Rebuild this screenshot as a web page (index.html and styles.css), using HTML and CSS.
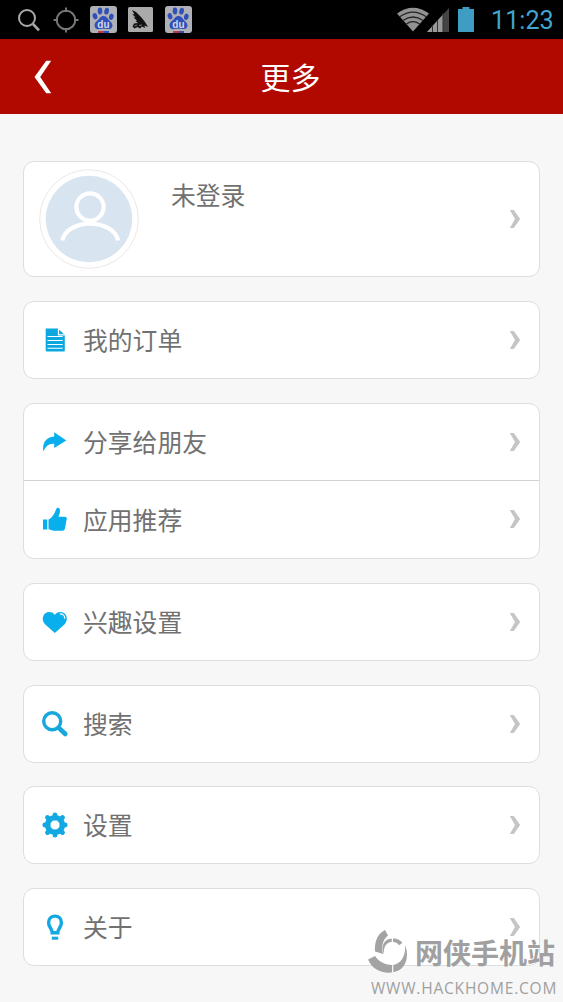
FILE: index.html
```html
<!DOCTYPE html>
<html lang="zh-CN">
<head>
<meta charset="utf-8">
<title>更多</title>
<link rel="stylesheet" href="styles.css">
</head>
<body>
<svg class="defs" width="0" height="0">
  <symbol id="chevron" viewBox="0 0 12 20"><path d="M.8 1H4.8L11.2 10L4.8 19H.8L6 10Z" fill="#c5c5c5"/></symbol>
  <symbol id="paw" viewBox="0 0 27 27">
    <rect width="27" height="27" rx="3" fill="#b0b1b6"/>
    <g fill="#3050b8">
      <ellipse cx="10" cy="5" rx="2.3" ry="3.4"/><ellipse cx="16.6" cy="5.2" rx="2.3" ry="3.4" transform="rotate(12 16.6 5.2)"/>
      <ellipse cx="5" cy="10.3" rx="2.3" ry="3.2" transform="rotate(-18 5 10.3)"/><ellipse cx="21.3" cy="10.8" rx="2.3" ry="3.2" transform="rotate(12 21.3 10.8)"/>
      <path d="M13.4 10C10.5 10 9.6 12.7 7.8 14.3C5.7 16.2 4.2 17.4 4.6 20C5 23 7.3 23.5 9.8 23C12.4 22.5 14.7 22.5 17.3 23C20 23.5 22.4 22.4 22.5 19.5C22.6 17 20.5 15.9 18.8 13.9C17.4 12.2 16.1 10 13.4 10Z"/>
    </g>
    <rect x="8" y="25" width="6" height="2" fill="#b63c42"/><rect x="14" y="25" width="5" height="2" fill="#3050b8"/>
  </symbol>
</svg>

<header class="status">
  <svg class="s-search" viewBox="0 0 24 24"><circle cx="10" cy="10" r="8" fill="none" stroke="#a9a9a9" stroke-width="2"/><path d="M16 16L22 22.3" stroke="#a9a9a9" stroke-width="2.6"/></svg>
  <svg class="s-target" viewBox="0 0 26 26"><circle cx="13" cy="13" r="9.3" fill="none" stroke="#777" stroke-width="2"/><path d="M13 .5V5M13 21V25.5M.5 13H5M21 13H25.5" stroke="#777" stroke-width="2"/></svg>
  <svg class="s-paw" viewBox="0 0 27 27"><use href="#paw"/><text x="13.4" y="21.6" class="du">du</text></svg>
  <svg class="s-bird" viewBox="0 0 25 25"><rect width="25" height="25" rx="1.5" fill="#aaa"/><path d="M4 3L8 5L13 10L17 15L20 20L16.5 18.5L17 21L14 19.5L12 21.5L9.5 20L6.5 21.5L4.5 19.5L6 16.5L10 16L7.5 14L9 13.5L5.5 10.5L7.5 10.5L4.2 7L6.5 7.5Z" fill="#111"/><path d="M6.5 19L9 18M11 18.5L14 18" stroke="#999" stroke-width=".8"/></svg>
  <svg class="s-paw s-paw-last" viewBox="0 0 27 27"><use href="#paw"/><text x="13.4" y="21.6" class="du">du</text></svg>
  <span class="spacer"></span>
  <svg class="s-wifi" viewBox="0 0 32 25"><path d="M0 6.5Q16-5 32 6.5L16 24.5Z" fill="#929292"/><path d="M2.8 9.8Q16 .5 29.2 9.8M6 13.5Q16 6.5 26 13.5M9.4 17Q16 12.4 22.6 17" fill="none" stroke="#222" stroke-width="1.3"/></svg>
  <svg class="s-signal" viewBox="0 0 22 24"><path d="M0 24L22 0V24Z" fill="#444"/><path d="M0 24L16 6.5V24Z" fill="#999"/><path d="M5.5 17V24M10.5 12V24M16 5V24" stroke="#333" stroke-width="1"/></svg>
  <svg class="s-battery" viewBox="0 0 16 25"><path d="M0 2H4.5V0H11.5V2H16V25H0Z" fill="#3f9dc4"/></svg>
  <time class="clock">11:23</time>
</header>

<nav class="titlebar">
  <svg class="back" viewBox="0 0 18 34"><path d="M12.2 .7H17.2L6.2 17L17.2 33.3H12.2L.5 17Z" fill="#fff"/></svg>
  <h1 class="title">更多</h1>
</nav>

<main class="list">
  <section class="card profile">
    <svg class="avatar" viewBox="0 0 100 100"><circle cx="50" cy="50" r="49.3" fill="#fff" stroke="#eee7e5"/><circle cx="50" cy="50" r="43.3" fill="#d9e4f1"/><g fill="none" stroke="#fff" stroke-width="4.2"><circle cx="51" cy="38" r="13.6"/><path d="M23.5 71.5C25 61 38 54.6 51 54.6S77.5 61 79 71.5"/></g></svg>
    <span class="name">未登录</span>
    <svg class="chevron"><use href="#chevron"/></svg>
  </section>

  <section class="card"><div class="row">
    <svg class="icon" viewBox="0 0 32 32"><path d="M6.7 4.5H19L25.8 11V26.2Q25.8 27.5 24.5 27.5H8Q6.7 27.5 6.7 26.2Z" fill="#0ba8df"/><path d="M19.5 4.8V10.8H25.8" fill="none" stroke="#fff" stroke-width="1.2"/><path d="M8.5 12.5H23.7M8.5 16.5H23.7M8.5 20.5H23.7M8.5 24.2H23.7" stroke="#fff" stroke-width="1.1"/></svg>
    <span class="label">我的订单</span><svg class="chevron"><use href="#chevron"/></svg>
  </div></section>

  <section class="card">
    <div class="row">
      <svg class="icon" viewBox="0 0 32 32"><path d="M15.2 6.3L27.3 14.6L15.2 22V17.8C9.8 17.2 6.7 20.2 4.5 25.5C3 17.8 6.5 11 15.2 10.5Z" fill="#09aeec"/></svg>
      <span class="label">分享给朋友</span><svg class="chevron"><use href="#chevron"/></svg>
    </div>
    <div class="row">
      <svg class="icon" viewBox="0 0 32 32"><path d="M4 16.4H8.3V26.5H4ZM9.5 16.6C13 14.8 15.5 11 17 6.5C17.8 3.8 20.8 4.5 21 7.2C21.2 9.7 20.2 11.8 19.5 13.7H25.5C28 13.7 28.2 15.6 27.5 17L26 25.2C25.6 27.2 24.7 27.7 22.5 27.7H15C12.5 27.7 11.5 26.5 9.5 26.2Z" fill="#09aeec"/></svg>
      <span class="label">应用推荐</span><svg class="chevron"><use href="#chevron"/></svg>
    </div>
  </section>

  <section class="card"><div class="row">
    <svg class="icon" viewBox="0 0 32 32"><path d="M15.8 27L6 18.2C1.5 13.5 4.3 6 10.2 6C13 6 14.7 7.2 15.8 9C17 7.2 18.8 6 21.5 6C27.4 6 30 13.5 25.7 18.2Z" fill="#09aeec"/><path d="M20.8 7.9C24 7.6 26.1 9.8 25.7 12.8" fill="none" stroke="#fff" stroke-width="1.1"/></svg>
    <span class="label">兴趣设置</span><svg class="chevron"><use href="#chevron"/></svg>
  </div></section>

  <section class="card"><div class="row">
    <svg class="icon" viewBox="0 0 32 32"><circle cx="13.2" cy="13.2" r="8.5" fill="none" stroke="#18a7dd" stroke-width="3.4"/><path d="M19.8 19.8L26.3 26" stroke="#18a7dd" stroke-width="4.6" stroke-linecap="round"/></svg>
    <span class="label">搜索</span><svg class="chevron"><use href="#chevron"/></svg>
  </div></section>

  <section class="card"><div class="row">
    <svg class="icon" viewBox="-16 -16 32 32"><g fill="none" stroke="#12a9e3"><circle r="7.4" stroke-width="5.4"/><path d="M0-7V-10.2M0 7V10.2M-7 0H-10.2M7 0H10.2M-5.4-5.4L-7.5-7.5M5.4 5.4L7.5 7.5M-5.4 5.4L-7.5 7.5M5.4-5.4L7.5-7.5" stroke-width="4.8" stroke-linecap="round"/></g></svg>
    <span class="label">设置</span><svg class="chevron"><use href="#chevron"/></svg>
  </div></section>

  <section class="card"><div class="row">
    <svg class="icon" viewBox="0 0 32 32"><path d="M13.2 21.8C13.2 17.8 9.6 16 9.6 11.7C9.6 7.9 12.2 5.1 16 5.1S22.4 7.9 22.4 11.7C22.4 16 18.8 17.8 18.8 21.8Z" fill="none" stroke="#12a9e3" stroke-width="3.4"/><path d="M12.8 27.2H19.2" stroke="#12a9e3" stroke-width="3"/></svg>
    <span class="label">关于</span><svg class="chevron"><use href="#chevron"/></svg>
  </div></section>
</main>

<aside class="watermark">
  <div class="brand">
    <svg class="mark" viewBox="0 0 40 44" fill="#a3a3a3"><path d="M17 1L20 6.5C14.5 11 13 18 15.3 25L7 22.5C6.5 13 9 5 17 1Z"/><path d="M0 30.5L7 27C11 32.5 16.5 35.5 24 36V43.5C13 44.5 4 40 0 30.5Z"/><path d="M25.3 36C33 34.5 38 27 37 16C41.5 27 38.5 41 25.3 43.3Z"/><path d="M15.8 25C12.5 17 16 10 23.7 9.5V13C18 13.5 15.5 18 15.8 25ZM25 9.5C29 9.3 32.5 11 34.3 14L31 16.2C29.5 14 27.5 13 25 13Z"/></svg>
    <span class="brand-name">网侠手机站</span>
  </div>
  <div class="brand-url">WWW.HACKHOME.COM</div>
</aside>
</body>
</html>
```
FILE: styles.css
```css
* { box-sizing: border-box; }
body {
  position: relative;
  margin: 0;
  height: 1002px;
  overflow: hidden;
  background: #f7f7f7;
  font-family: "Noto Sans CJK SC", sans-serif;
  color: #717171;
}
svg { display: block; flex: none; }
.defs { position: absolute; }

.status {
  display: flex;
  align-items: center;
  height: 39px;
  padding: 0 9px 0 17px;
  background: #000;
}
.s-search { width: 24px; height: 24px; }
.s-target { width: 26px; height: 26px; margin-left: 12px; }
.s-paw { width: 27px; height: 27px; margin-left: 11px; }
.s-bird { width: 25px; height: 25px; margin-left: 11px; }
.s-paw-last { margin-left: 12px; }
.du { font: bold 10px "Liberation Sans", sans-serif; fill: #d4d9e8; text-anchor: middle; }
.spacer { flex: 1; }
.s-wifi { width: 32px; height: 25px; }
.s-signal { width: 22px; height: 24px; margin-left: -2px; }
.s-battery { width: 16px; height: 25px; margin-left: 9px; }
.clock {
  width: 63px;
  margin-left: 17px;
  padding-top: 2px;
  font: 400 25.2px/39px Roboto, sans-serif;
  color: #40a5cf;
  white-space: nowrap;
}

.titlebar {
  display: grid;
  grid-template-columns: 60px 1fr 60px;
  align-items: center;
  height: 75px;
  padding: 0 18px 0 34px;
  background: #b10900;
}
.back { width: 18px; height: 34px; }
.title {
  margin: 0;
  padding: 0 0 1px 2px;
  font-size: 30px;
  line-height: 44px;
  font-weight: 400;
  text-align: center;
  color: #fff;
}

.list {
  display: flex;
  flex-direction: column;
  gap: 23.8px;
  padding: 47px 23px 0;
}
.card {
  border: 1.5px solid #dedede;
  border-radius: 11px;
  background: #fff;
}
.profile {
  display: flex;
  align-items: center;
  height: 116px;
  padding: 0 18px 0 15px;
}
.avatar { width: 100px; height: 100px; }
.name {
  align-self: flex-start;
  flex: 1;
  margin: 14px 0 0 32px;
  font-size: 24.8px;
  line-height: 36px;
}
.row {
  display: flex;
  align-items: center;
  height: 76px;
  padding: 0 18px 0 15px;
}
.row + .row { height: 78.4px; border-top: 1px solid #d2d2d2; }
.icon { width: 32px; height: 32px; }
.label {
  flex: 1;
  margin-left: 12px;
  padding-bottom: 2px;
  font-size: 24.8px;
  line-height: 36px;
}
.row + .row .label { padding-bottom: 0; }
.chevron { width: 12px; height: 20px; }

.watermark {
  position: absolute;
  left: 368px;
  top: 929px;
  color: #a0a0a0;
}
.brand { display: flex; align-items: center; height: 44px; }
.mark { width: 40px; height: 44px; }
.brand-name {
  margin: 1px 0 0 7px;
  font-size: 28px;
  line-height: 40px;
  font-weight: 700;
  white-space: nowrap;
}
.brand-url {
  margin: 4px 0 0 3px;
  font: 500 15.5px/22px "Open Sans", sans-serif;
  letter-spacing: 0.8px;
  white-space: nowrap;
}
```
